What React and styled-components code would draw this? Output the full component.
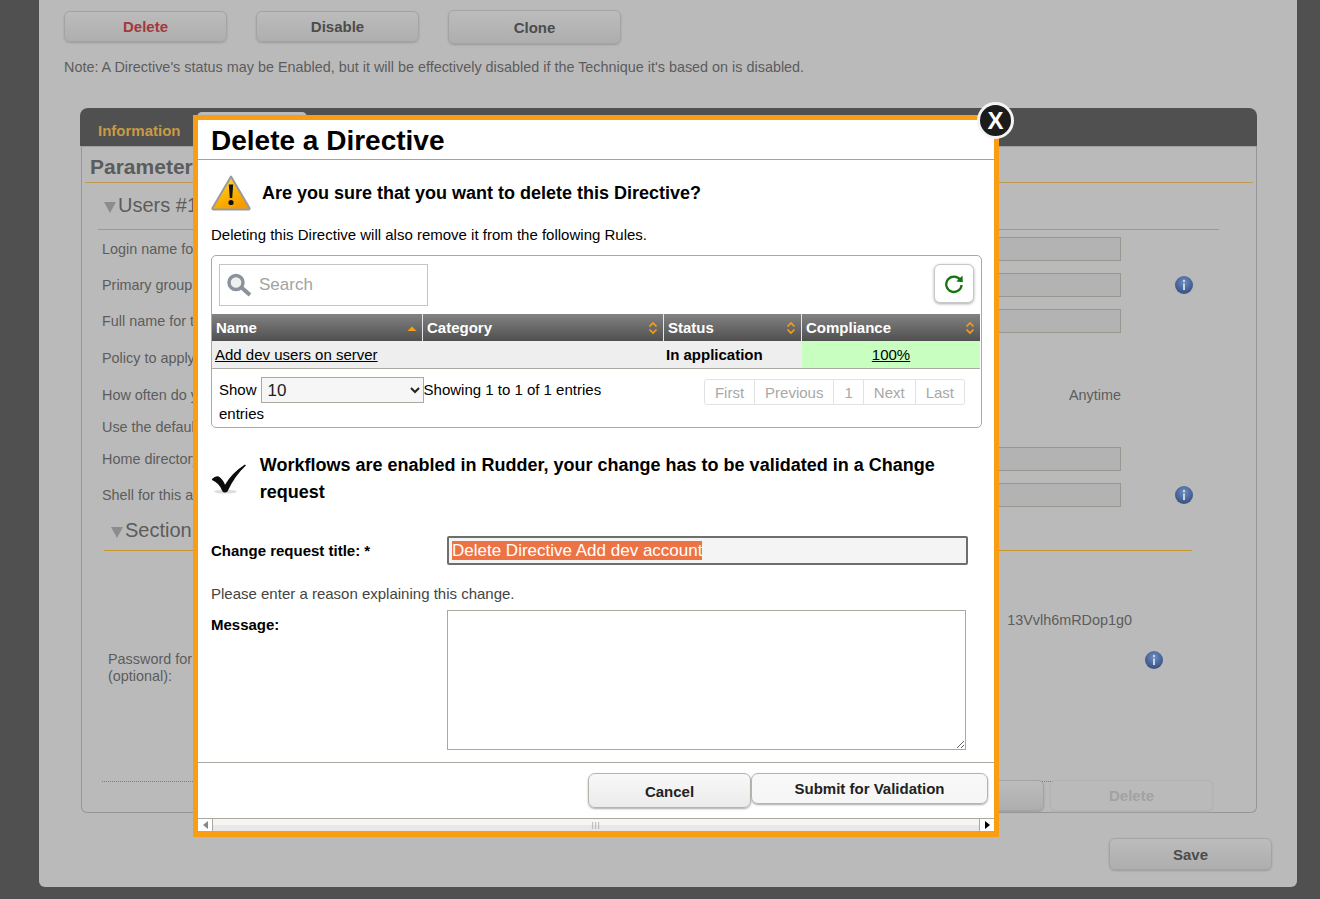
import React from 'react';
import styled, { createGlobalStyle } from 'styled-components';

const GlobalStyle = createGlobalStyle`
  html, body { margin: 0; padding: 0; background: #505050; }
  body { font-family: "Liberation Sans", Arial, sans-serif; font-size: 14px; color: #555; overflow: hidden; }
`;

const Page = styled.div`
  position: relative;
  width: 1320px;
  height: 899px;
  overflow: hidden;
`;

/* ---- greyed page behind the popup ---- */
const Panel = styled.div`
  margin-left: 39px;
  width: 1233px;
  height: 887px;
  padding-left: 25px;
  background: #bababa;
  border-radius: 0 0 6px 6px;
  box-sizing: content-box;
  overflow: hidden;
`;

const TopActions = styled.div`
  display: flex;
  align-items: flex-start;
  padding-top: 10px;
  height: 35px;
`;

const GreyButton = styled.div`
  box-sizing: border-box;
  width: ${p => p.$w || 163}px;
  height: ${p => p.$h || 31}px;
  margin: ${p => p.$m || '0'};
  display: flex;
  align-items: center;
  justify-content: center;
  border: 1px solid ${p => (p.$off ? '#b3b3b3' : '#a4a4a4')};
  border-radius: 6px;
  background: ${p => (p.$off ? '#bababa' : 'linear-gradient(#bcbcbc, #aeaeae)')};
  box-shadow: ${p => (p.$off ? '0 1px 2px #b0b0b0' : '0 1px 2px #9a9a9a')};
  font-weight: bold;
  font-size: 15px;
  color: ${p => p.$color || '#4c4c4c'};
`;

const Note = styled.p`
  margin: 14px 0 0;
  font-size: 14.4px;
  line-height: 17px;
  color: #5c5c5c;
`;

const TabBar = styled.div`
  display: flex;
  align-items: flex-end;
  margin: 32px 0 0 16px;
  width: 1177px;
  height: 38px;
  background: #505050;
  border-radius: 8px 8px 0 0;
`;

const Tab = styled.div`
  font-weight: bold;
  font-size: 15px;
  color: #c99a45;
  padding: 0 0 7px 18px;
  width: 99px;
`;

const ActiveTab = styled.div`
  width: 110px;
  height: 34px;
  background: #bababa;
  border-radius: 5px 5px 0 0;
`;

const Box = styled.div`
  box-sizing: border-box;
  margin-left: 17px;
  width: 1176px;
  height: 667px;
  border: 1px solid #969696;
  border-top-color: #a0a0a0;
  border-radius: 0 0 6px 6px;
  padding: 0 3px;
`;

const BoxTitle = styled.div`
  height: 35px;
  line-height: 40px;
  padding-left: 5px;
  font-size: 21px;
  font-weight: bold;
  color: #5c5c5c;
  border-bottom: 1px solid #c09a55;
`;

const Fold = styled.div`
  display: flex;
  align-items: center;
  gap: 2px;
  box-sizing: border-box;
  height: ${p => p.$h}px;
  margin: ${p => p.$m};
  width: ${p => p.$w}px;
  padding: 0 0 2px ${p => p.$pad || 6}px;
  border-bottom: 1px solid #c8952f;
  font-size: 20px;
  color: #5c5c5c;
`;

const FoldArrow = styled.span`
  width: 0;
  height: 0;
  margin-top: 4px;
  border-left: 6px solid transparent;
  border-right: 6px solid transparent;
  border-top: 11px solid #8c8c8c;
`;

const FieldRow = styled.div`
  display: grid;
  grid-template-columns: 600px 419px auto;
  align-items: center;
  margin-left: 17px;
  height: ${p => p.$h || 36}px;
  font-size: 14.4px;
  color: #5c5c5c;
`;

const FakeInput = styled.div`
  box-sizing: border-box;
  height: 24px;
  background: #b3b3b3;
  border: 1px solid #989890;
`;

const InfoSlot = styled.div`
  margin-left: ${p => p.$left || 54}px;
  height: 18px;
`;

const Anytime = styled.div`
  text-align: right;
`;

const PasswordRow = styled.div`
  display: grid;
  grid-template-columns: 1042px auto;
  margin: 61px 0 0 23px;
  font-size: 14.4px;
  line-height: 17px;
  color: #5c5c5c;
`;

const Hash = styled.div`
  margin: 0 0 22px 0;
  text-align: right;
  grid-column: 1;
  padding-right: 18px;
`;

const Dotted = styled.div`
  margin: 96px 0 0 17px;
  width: 1067px;
  border-top: 1px dotted #7a7a7a;
  height: 0;
`;

const BoxButtons = styled.div`
  display: flex;
  justify-content: flex-end;
  gap: 6px;
  margin: -2px 40px 0 0;
`;

const SaveRow = styled.div`
  display: flex;
  justify-content: flex-end;
  margin: 25px 0 0;
  width: 1208px;
`;

/* ---- popup ---- */
const Modal = styled.div`
  position: absolute;
  left: 193px;
  top: 115px;
  box-sizing: border-box;
  width: 806px;
  height: 722px;
  border: 5px solid #f99e13;
  background: #fff;
  display: flex;
  flex-direction: column;
  color: #000;
`;

const CloseButton = styled.div`
  position: absolute;
  left: 977px;
  top: 102px;
  box-sizing: border-box;
  width: 37px;
  height: 37px;
  border-radius: 50%;
  background: #1c1c1c;
  border: 3px solid #f4f4f4;
  color: #fff;
  display: flex;
  align-items: center;
  justify-content: center;
  font: bold 24px "Liberation Sans", sans-serif;
`;

const ModalHeader = styled.h1`
  margin: 0;
  box-sizing: border-box;
  height: 40px;
  padding-left: 13px;
  font-size: 28px;
  line-height: 41px;
  font-weight: bold;
  color: #000;
  border-bottom: 1px solid #a3a3a3;
`;

const ModalBody = styled.div`
  flex: 1;
  padding: 0 12px 0 13px;
  display: flex;
  flex-direction: column;
`;

const Question = styled.div`
  display: flex;
  align-items: center;
  height: 66px;
  gap: 11px;
  font-size: 18px;
  font-weight: bold;
`;

const BodyText = styled.p`
  margin: 0;
  font-size: 15px;
  line-height: 17px;
  color: ${p => p.$color || '#000'};
`;

const TableWrap = styled.div`
  box-sizing: border-box;
  margin-top: 12px;
  width: 771px;
  height: 173px;
  border: 1px solid #aaaaa2;
  border-radius: 5px;
`;

const TableTop = styled.div`
  display: flex;
  justify-content: space-between;
  padding: 8px 7px 0;
  height: 50px;
  box-sizing: content-box;
`;

const SearchBox = styled.div`
  box-sizing: border-box;
  width: 209px;
  height: 42px;
  display: flex;
  align-items: center;
  gap: 7px;
  padding-left: 6px;
  border: 1px solid #c4c4c4;
`;

const SearchInput = styled.input`
  border: 0;
  outline: 0;
  padding: 0;
  width: 160px;
  font: 17px "Liberation Sans", sans-serif;
  &::placeholder { color: #a3a3a3; opacity: 1; }
`;

const RefreshButton = styled.div`
  box-sizing: border-box;
  width: 40px;
  height: 39px;
  display: flex;
  align-items: center;
  justify-content: center;
  border: 1px solid #c8c8c8;
  border-radius: 6px;
  background: #fff;
  box-shadow: 0 1px 3px #aaa;
`;

const Grid = styled.div`
  display: grid;
  grid-template-columns: 211px 241px 138px 178px;
`;

const HeadCell = styled.div`
  box-sizing: border-box;
  height: 27px;
  display: flex;
  align-items: center;
  justify-content: space-between;
  padding: 0 5px 0 4px;
  background: linear-gradient(#838383, #4f4f4f);
  border-right: ${p => (p.$last ? '0' : '1px solid #e6e6e6')};
  color: #fff;
  font-size: 15px;
  font-weight: bold;
`;

const Cell = styled.div`
  box-sizing: border-box;
  height: 28px;
  display: flex;
  align-items: center;
  justify-content: ${p => (p.$center ? 'center' : 'flex-start')};
  padding: ${p => p.$pad || '0 3px'};
  background: ${p => p.$bg || '#eeeeee'};
  border-bottom: 1px solid #aaaaa2;
  font-size: 15px;
  font-weight: ${p => (p.$bold ? 'bold' : 'normal')};
  a { color: #000; text-decoration: underline; }
`;

const TableFoot = styled.div`
  position: relative;
  padding: 8px 7px 0;
  font-size: 15px;
  line-height: 22px;
`;

const LengthLine = styled.div`
  display: flex;
  align-items: center;
  gap: 4px;
  height: 26px;
`;

const LengthSelect = styled.select`
  box-sizing: border-box;
  width: 163px;
  height: 26px;
  margin: 0;
  padding-left: 2px;
  background: #f6f6f6;
  border: 1px solid #aaaaa2;
  border-radius: 0;
  font: 17px "Liberation Sans", sans-serif;
  color: #222;
`;

const Pager = styled.div`
  position: absolute;
  right: 16px;
  top: 10px;
  display: flex;
  height: 24px;
  border: 1px solid #e2e2e2;
  border-radius: 3px;
`;

const PagerItem = styled.span`
  padding: 0 10px;
  line-height: 25px;
  color: #a8a8a8;
  border-left: ${p => (p.$first ? '0' : '1px solid #e2e2e2')};
`;

const WorkflowNote = styled.div`
  display: flex;
  align-items: center;
  gap: 12px;
  margin-top: 24px;
  font-size: 18px;
  line-height: 27px;
  font-weight: bold;
`;

const FormRow = styled.div`
  display: grid;
  grid-template-columns: 236px auto;
  margin-top: ${p => p.$top}px;
  align-items: ${p => p.$align || 'center'};
`;

const FormLabel = styled.label`
  font-size: 15px;
  font-weight: bold;
  color: #000;
`;

const TitleField = styled.div`
  box-sizing: border-box;
  width: 521px;
  height: 29px;
  padding: 3px;
  background: #f4f4f4;
  border: 2px solid #6e6e6e;
  border-radius: 2px;
  font-size: 17px;
  line-height: 20px;
  span { background: #ee7344; color: #fff; }
`;

const MessageArea = styled.textarea`
  box-sizing: border-box;
  display: block;
  width: 519px;
  height: 140px;
  margin: 0;
  border: 1px solid #aaaaa2;
  border-radius: 0;
  outline: 0;
`;

const ModalFooter = styled.div`
  box-sizing: border-box;
  height: 56px;
  border-top: 1px solid #a8a8a0;
  padding: 10px 6px 0 0;
  display: flex;
  justify-content: flex-end;
  align-items: flex-start;
`;

const FootButton = styled.div`
  box-sizing: border-box;
  width: ${p => p.$w}px;
  height: ${p => p.$h}px;
  display: flex;
  align-items: center;
  justify-content: center;
  padding-top: ${p => p.$pt || 0}px;
  border: 1px solid #b4b4aa;
  border-radius: 7px;
  background: linear-gradient(#f8f8f8, ${p => p.$end});
  box-shadow: 0 1px 2px #aaa;
  font-size: 15px;
  font-weight: bold;
  color: #222;
`;

const ScrollBar = styled.div`
  box-sizing: border-box;
  height: 14px;
  display: flex;
  align-items: center;
  border-top: 1px solid #aaaaa2;
  border-bottom: 1px solid #aaaaa2;
  background: linear-gradient(#f6f5f2 50%, #e8e8e8 50%);
`;

const ScrollEnd = styled.div`
  box-sizing: border-box;
  width: ${p => p.$w}px;
  height: 100%;
  background: #fff;
  display: flex;
  align-items: center;
  justify-content: center;
  border: 1px solid #aaaaa2;
  border-width: 0 ${p => (p.$left ? 1 : 0)}px 0 ${p => (p.$left ? 0 : 1)}px;
  &::before {
    content: '';
    border-top: 4px solid transparent;
    border-bottom: 4px solid transparent;
    ${p => (p.$left ? 'border-right: 5px solid #888;' : 'border-left: 5px solid #000;')}
  }
`;

const ScrollTrack = styled.div`
  flex: 1;
  text-align: center;
  font-size: 8px;
  line-height: 12px;
  letter-spacing: 1px;
  color: #999;
`;

const WarningIcon = () => (
  <svg width="40" height="36" viewBox="0 0 40 36">
    <defs>
      <linearGradient id="warnFill" x1="0" y1="0" x2="0.6" y2="1">
        <stop offset="0" stopColor="#ffe45a" />
        <stop offset="0.6" stopColor="#fbb400" />
        <stop offset="1" stopColor="#f59a00" />
      </linearGradient>
    </defs>
    <path d="M20 1.5 L38.5 33 Q39 34.5 37.5 34.5 L2.5 34.5 Q1 34.5 1.5 33 Z" fill="url(#warnFill)" stroke="#9a9a9a" strokeWidth="2" strokeLinejoin="round" />
    <path d="M17.8 9.5 L22.2 9.5 L21.2 23 L18.8 23 Z" fill="#111" />
    <circle cx="20" cy="27.5" r="2.6" fill="#111" />
  </svg>
);

const CheckIcon = () => (
  <svg width="38" height="36" viewBox="0 0 38 36">
    <ellipse cx="15" cy="31" rx="12" ry="2" fill="#ddd" />
    <path d="M1 18 Q5 14 8 15.5 Q12 18 14.5 24 Q21 12 35 3 L36 4 Q24 15 17 31 Q16 32 14 32 Q12 32 11 29 Q8 22 1 19 Z" fill="#0c0c0c" />
  </svg>
);

const SearchIcon = () => (
  <svg width="26" height="24" viewBox="0 0 26 24">
    <circle cx="10" cy="9.5" r="7" fill="#eef0f2" stroke="#8b929c" strokeWidth="3.4" />
    <path d="M15.5 14.5 L24 22" stroke="#8b929c" strokeWidth="4" />
  </svg>
);

const RefreshIcon = () => (
  <svg width="20" height="20" viewBox="0 0 20 20" fill="none">
    <path d="M16.2 5.8 A7.7 7.7 0 1 0 17.6 11" stroke="#15740f" strokeWidth="2.3" />
    <path d="M12.3 7.6 L18.8 8.2 L18.5 1.4 Z" fill="#15740f" />
  </svg>
);

const SortIcon = ({ up }) => (
  <svg width="10" height="14" viewBox="0 0 10 14" fill="none">
    {up ? (
      <path d="M0.5 10 L5 5.5 L9.5 10 Z" fill="#f99e13" />
    ) : (
      <path d="M1.5 5.5 L5 2 L8.5 5.5 M1.5 8.5 L5 12 L8.5 8.5" stroke="#f99e13" strokeWidth="1.7" />
    )}
  </svg>
);

const InfoIcon = ({ id }) => (
  <svg width="18" height="18" viewBox="0 0 18 18">
    <defs>
      <radialGradient id={id} cx="0.5" cy="0.35" r="0.7">
        <stop offset="0" stopColor="#6d8fc4" />
        <stop offset="1" stopColor="#33497c" />
      </radialGradient>
    </defs>
    <circle cx="9" cy="9" r="9" fill={`url(#${id})`} />
    <circle cx="9" cy="5" r="1.2" fill="#ccd4e2" />
    <rect x="8" y="7.5" width="2" height="6.5" fill="#ccd4e2" />
  </svg>
);

function BackgroundPage() {
  return (
    <Panel>
      <TopActions>
        <GreyButton $color="#a5383a" $m="1px 0 0">Delete</GreyButton>
        <GreyButton $m="1px 0 0 29px">Disable</GreyButton>
        <GreyButton $w={173} $h={34} $m="0 0 0 29px">Clone</GreyButton>
      </TopActions>
      <Note>Note: A Directive's status may be Enabled, but it will be effectively disabled if the Technique it's based on is disabled.</Note>
      <TabBar>
        <Tab>Information</Tab>
        <ActiveTab />
      </TabBar>
      <Box>
        <BoxTitle>Parameters</BoxTitle>
        <Fold $h={47} $m="0 0 1px 13px" $w={1121}><FoldArrow />Users #1</Fold>
        <FieldRow><span>Login name for this account</span><FakeInput /></FieldRow>
        <FieldRow><span>Primary group for this user</span><FakeInput /><InfoSlot><InfoIcon id="infoA" /></InfoSlot></FieldRow>
        <FieldRow><span>Full name for this account</span><FakeInput /></FieldRow>
        <FieldRow $h={38}><span>Policy to apply on this account</span></FieldRow>
        <FieldRow><span>How often do you want to check</span><Anytime>Anytime</Anytime></FieldRow>
        <FieldRow $h={28}><span>Use the default home directory</span></FieldRow>
        <FieldRow><span>Home directory</span><FakeInput /></FieldRow>
        <FieldRow><span>Shell for this account</span><FakeInput /><InfoSlot><InfoIcon id="infoB" /></InfoSlot></FieldRow>
        <Fold $h={38} $m="0 0 0 19px" $w={1088} $pad={7}><FoldArrow />Section</Fold>
        <PasswordRow>
          <Hash>13Vvlh6mRDop1g0</Hash>
          <span />
          <span>Password for<br />(optional):</span>
          <InfoSlot $left={-5}><InfoIcon id="infoC" /></InfoSlot>
        </PasswordRow>
        <Dotted />
        <BoxButtons>
          <GreyButton $w={180}>Clear</GreyButton>
          <GreyButton $off $color="#a2a2a2">Delete</GreyButton>
        </BoxButtons>
      </Box>
      <SaveRow><GreyButton $h={32}>Save</GreyButton></SaveRow>
    </Panel>
  );
}

function DeletePopup() {
  return (
    <>
      <Modal>
        <ModalHeader>Delete a Directive</ModalHeader>
        <ModalBody>
          <Question><WarningIcon />Are you sure that you want to delete this Directive?</Question>
          <BodyText>Deleting this Directive will also remove it from the following Rules.</BodyText>
          <TableWrap>
            <TableTop>
              <SearchBox>
                <SearchIcon />
                <SearchInput placeholder="Search" />
              </SearchBox>
              <RefreshButton><RefreshIcon /></RefreshButton>
            </TableTop>
            <Grid>
              <HeadCell>Name<SortIcon up /></HeadCell>
              <HeadCell>Category<SortIcon /></HeadCell>
              <HeadCell>Status<SortIcon /></HeadCell>
              <HeadCell $last>Compliance<SortIcon /></HeadCell>
              <Cell><a>Add dev users on server</a></Cell>
              <Cell />
              <Cell $bold $pad="0 2px">In application</Cell>
              <Cell $center $bg="#c8ffc0"><a>100%</a></Cell>
            </Grid>
            <TableFoot>
              <LengthLine>
                Show <LengthSelect defaultValue="10"><option>10</option></LengthSelect>
                <span style={{ marginLeft: -4 }}>Showing 1 to 1 of 1 entries</span>
              </LengthLine>
              entries
              <Pager>
                <PagerItem $first>First</PagerItem>
                <PagerItem>Previous</PagerItem>
                <PagerItem>1</PagerItem>
                <PagerItem>Next</PagerItem>
                <PagerItem>Last</PagerItem>
              </Pager>
            </TableFoot>
          </TableWrap>
          <WorkflowNote>
            <CheckIcon />
            <span>Workflows are enabled in Rudder, your change has to be validated in a Change request</span>
          </WorkflowNote>
          <FormRow $top={30}>
            <FormLabel>Change request title: *</FormLabel>
            <TitleField><span>Delete Directive Add dev account</span></TitleField>
          </FormRow>
          <BodyText $color="#444" style={{ marginTop: 20 }}>Please enter a reason explaining this change.</BodyText>
          <FormRow $top={8} $align="start">
            <FormLabel style={{ paddingTop: 6 }}>Message:</FormLabel>
            <MessageArea />
          </FormRow>
        </ModalBody>
        <ModalFooter>
          <FootButton $w={163} $h={35} $pt={2} $end="#ebebeb">Cancel</FootButton>
          <FootButton $w={237} $h={31} $end="#f6f6f6">Submit for Validation</FootButton>
        </ModalFooter>
        <ScrollBar>
          <ScrollEnd $left $w={15} />
          <ScrollTrack>|||</ScrollTrack>
          <ScrollEnd $w={15} />
        </ScrollBar>
      </Modal>
      <CloseButton>X</CloseButton>
    </>
  );
}

export default function App() {
  return (
    <Page>
      <GlobalStyle />
      <BackgroundPage />
      <DeletePopup />
    </Page>
  );
}
